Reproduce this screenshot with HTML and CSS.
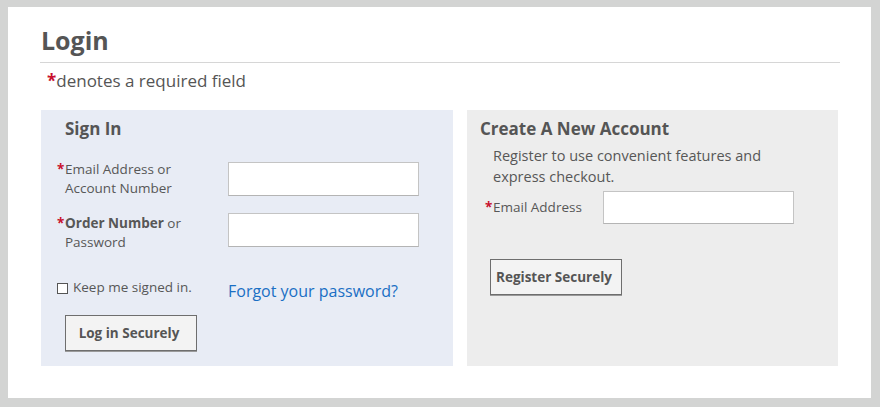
FILE: index.html
```html
<!DOCTYPE html>
<html lang="en">
<head>
<meta charset="utf-8">
<title>Login</title>
<link rel="stylesheet" href="styles.css">
</head>
<body>
<div class="page">
  <h1 class="title">Login</h1>
  <p class="required-note"><span class="req">*</span>denotes a required field</p>
  <div class="panels">
    <section class="panel signin">
      <h2 class="panel-title">Sign In</h2>
      <div class="field-row">
        <label class="field-label"><span class="req">*</span><span>Email Address or<br>Account Number</span></label>
        <input class="text-input" type="text">
      </div>
      <div class="field-row second">
        <label class="field-label"><span class="req">*</span><span><b>Order Number</b> or<br>Password</span></label>
        <input class="text-input" type="password">
      </div>
      <div class="options-row">
        <label class="keep"><input class="check" type="checkbox"><span>Keep me signed in.</span></label>
        <a class="forgot" href="#">Forgot your password?</a>
      </div>
      <button class="btn login-btn" type="button">Log in Securely</button>
    </section>
    <section class="panel create">
      <h2 class="panel-title create-title">Create A New Account</h2>
      <p class="create-desc">Register to use convenient features and<br>express checkout.</p>
      <div class="create-row">
        <label class="create-label"><span class="req">*</span><span>Email Address</span></label>
        <input class="text-input" type="email">
      </div>
      <button class="btn register-btn" type="button">Register Securely</button>
    </section>
  </div>
</div>
</body>
</html>
```
FILE: styles.css
```css
* { box-sizing: border-box; }
html, body { margin: 0; }
body {
  background: #d3d4d3;
  padding: 7px 9px 9px 8px;
  height: 407px;
  font-family: "Open Sans", "Liberation Sans", sans-serif;
  color: #575757;
}
.page {
  background: #fff;
  height: 391px;
  padding: 18px 31px 0 32px;
}
.title {
  margin: 0;
  font-size: 25px;
  line-height: 30px;
  font-weight: 700;
  color: #555;
  padding: 0 0 7px 1px;
  border-bottom: 1px solid #d6d6d6;
}
.required-note {
  margin: 7px 0 0 0;
  padding-left: 7px;
  font-size: 17px;
  line-height: 22px;
  color: #555;
}
.req {
  color: #c8102e;
  font-weight: 700;
}
.panels {
  display: flex;
  gap: 14px;
  margin: 18px 2px 0 1px;
  height: 256px;
}
.panel {
  padding-top: 8px;
}
.signin {
  width: 412px;
  background: #e8ecf5;
}
.create {
  flex: 1;
  background: #ededed;
}
.panel-title {
  margin: 0;
  font-size: 17px;
  line-height: 22px;
  font-weight: 700;
  color: #555;
  padding-left: 24px;
}
.field-row {
  display: grid;
  grid-template-columns: 171px 191px;
  align-items: start;
  margin: 20px 0 0 16px;
}
.field-row.second { margin-top: 14px; }
.field-row.second .field-label { padding-top: 2px; }
.field-row.second .text-input { margin-top: 1px; }
.field-label {
  display: flex;
  font-size: 13.5px;
  line-height: 19px;
}
.field-label .req,
.create-label .req {
  width: 8px;
  flex: none;
}
.text-input {
  height: 34px;
  margin: 2px 0 0 0;
  border: 1px solid #c4c4c4;
  border-bottom-color: #b4b4b4;
  background: #fff;
  padding: 0 6px;
  font: inherit;
  outline: none;
}
.options-row {
  display: flex;
  align-items: flex-start;
  margin: 26px 0 0 16px;
}
.keep {
  width: 171px;
  display: flex;
  align-items: flex-start;
  font-size: 13.5px;
  line-height: 19px;
}
.check {
  appearance: none;
  -webkit-appearance: none;
  width: 11px;
  height: 11px;
  margin: 5px 5px 0 0;
  border: 1px solid #555;
  background: #fff;
  flex: none;
}
.forgot {
  margin-top: 2px;
  font-size: 16px;
  line-height: 22px;
  color: #1a6fc4;
  text-decoration: none;
}
.btn {
  display: block;
  width: 132px;
  height: 36px;
  border: 1px solid #6e6e6e;
  box-shadow: 0 1px 0 #9a9a9a;
  background: #f3f3f3;
  color: #555;
  font-family: "Open Sans", "Liberation Sans", sans-serif;
  font-size: 13.5px;
  font-weight: 700;
  padding: 0 4px 0 0;
  border-radius: 0;
}
.login-btn { margin: 13px 0 0 24px; }
.create-title { padding-left: 13px; }
.create-desc {
  margin: 5px 0 0 0;
  padding-left: 26px;
  font-size: 14.5px;
  line-height: 21px;
}
.create-row {
  display: grid;
  grid-template-columns: 118px 191px;
  align-items: center;
  margin: 4px 0 0 18px;
}
.create-row .text-input { margin: 0; height: 33px; }
.create-label {
  display: flex;
  font-size: 13.5px;
  line-height: 19px;
}
.register-btn { margin: 35px 0 0 23px; }
```
